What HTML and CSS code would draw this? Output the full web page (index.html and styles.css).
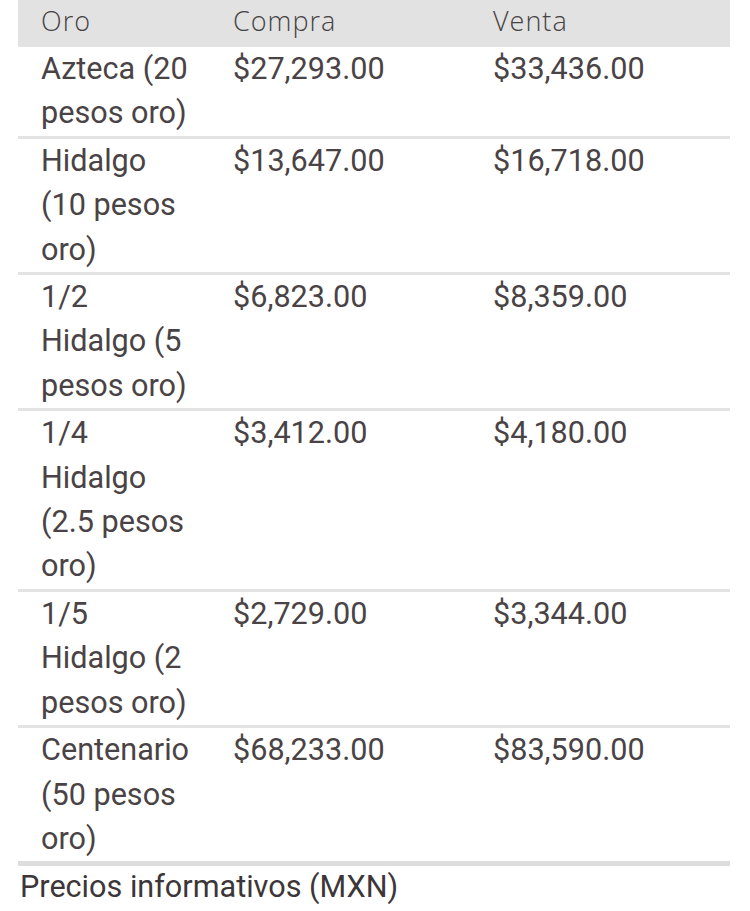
FILE: index.html
```html
<!DOCTYPE html>
<html lang="es">
<head>
<meta charset="utf-8">
<title>Precios del oro</title>
<link rel="stylesheet" href="styles.css">
</head>
<body>
<table class="prices">
  <colgroup>
    <col class="c-name">
    <col class="c-buy">
    <col class="c-sell">
  </colgroup>
  <thead>
    <tr><th>Oro</th><th>Compra</th><th>Venta</th></tr>
  </thead>
  <tbody>
    <tr><td>Azteca (20 pesos oro)</td><td>$27,293.00</td><td>$33,436.00</td></tr>
    <tr><td>Hidalgo (10 pesos oro)</td><td>$13,647.00</td><td>$16,718.00</td></tr>
    <tr><td>1/2 Hidalgo (5 pesos oro)</td><td>$6,823.00</td><td>$8,359.00</td></tr>
    <tr><td>1/4 Hidalgo (2.5 pesos oro)</td><td>$3,412.00</td><td>$4,180.00</td></tr>
    <tr><td>1/5 Hidalgo (2 pesos oro)</td><td>$2,729.00</td><td>$3,344.00</td></tr>
    <tr class="last"><td>Centenario (50 pesos oro)</td><td>$68,233.00</td><td>$83,590.00</td></tr>
  </tbody>
</table>
<p class="note">Precios informativos (MXN)</p>
</body>
</html>
```
FILE: styles.css
```css
html, body {
  margin: 0;
  padding: 0;
  background: #ffffff;
}

body {
  font-family: Roboto, "Liberation Sans", sans-serif;
  color: #4a4345;
}

.prices {
  margin-left: 18px;
  width: 712px;
  table-layout: fixed;
  border-collapse: collapse;
  border-spacing: 0;
}

.c-name { width: 215px; }
.c-buy { width: 260px; }
.c-sell { width: 237px; }

.prices th {
  background: #e2e2e2;
  font-family: "Open Sans", sans-serif;
  font-weight: 300;
  font-size: 27px;
  letter-spacing: 1px;
  line-height: 42px;
  color: #454243;
  text-align: left;
  padding: 0 0 5px 0;
  vertical-align: top;
}

.prices td {
  font-size: 30.6px;
  line-height: 44.4px;
  padding: 0;
  vertical-align: top;
  border-bottom: 3px solid #e3e3e3;
}

.prices th:first-child,
.prices td:first-child {
  padding-left: 23px;
  padding-right: 40px;
}

.prices tr.last td {
  border-bottom: 5px solid #dddddd;
}

.note {
  margin: 3px 0 0 20px;
  font-size: 30.6px;
  line-height: 36px;
  color: #3c3638;
}
```
